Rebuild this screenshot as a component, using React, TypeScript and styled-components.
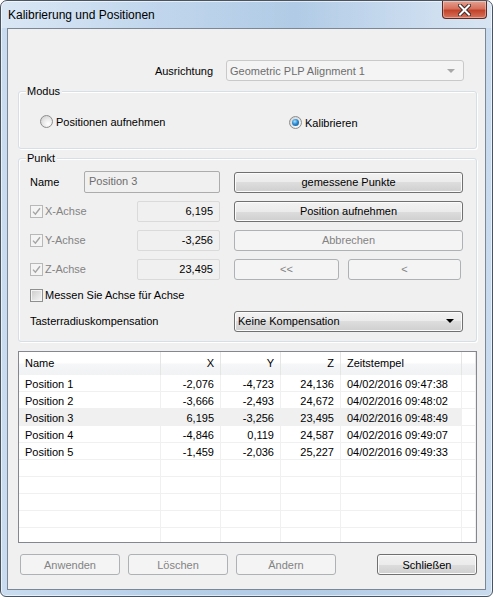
import React from "react";
import styled, { createGlobalStyle, css } from "styled-components";

const GlobalStyle = createGlobalStyle`
    html, body {
        margin: 0;
        padding: 0;
        background: #ffffff;
        overflow: hidden;
    }
    body {
        font-family: "Liberation Sans", Arial, sans-serif;
        font-size: 11px;
        color: #000000;
    }
`;

interface Measurement {
    name: string;
    x: string;
    y: string;
    z: string;
    time: string;
}

const measurements: Measurement[] = [
    { name: "Position 1", x: "-2,076", y: "-4,723", z: "24,136", time: "04/02/2016 09:47:38" },
    { name: "Position 2", x: "-3,666", y: "-2,493", z: "24,672", time: "04/02/2016 09:48:02" },
    { name: "Position 3", x: "6,195", y: "-3,256", z: "23,495", time: "04/02/2016 09:48:49" },
    { name: "Position 4", x: "-4,846", y: "0,119", z: "24,587", time: "04/02/2016 09:49:07" },
    { name: "Position 5", x: "-1,459", y: "-2,036", z: "25,227", time: "04/02/2016 09:49:33" },
];

const axes = [
    { label: "X-Achse", value: "6,195", button: "Position aufnehmen", enabled: true },
    { label: "Y-Achse", value: "-3,256", button: "Abbrechen", enabled: false },
];

const CheckMark: React.FC<{ color: string }> = ({ color }) => (
    <svg width="9" height="9" viewBox="0 0 9 9">
        <path d="M1 4.6 L3.4 7.2 L8 1.2" fill="none" stroke={color} strokeWidth="1.4" />
    </svg>
);

const App: React.FC = () => {
    return (
        <>
            <GlobalStyle />
            <Window>
                <TitleBar>
                    <Title>Kalibrierung und Positionen</Title>
                    <CloseButton>
                        <svg width="13" height="12" viewBox="0 0 13 12">
                            <path d="M2 1.5 L11 10.5 M11 1.5 L2 10.5" stroke="#3b2a2a" strokeWidth="4" strokeLinecap="square" />
                            <path d="M2 1.5 L11 10.5 M11 1.5 L2 10.5" stroke="#ffffff" strokeWidth="2" strokeLinecap="square" />
                        </svg>
                    </CloseButton>
                </TitleBar>

                <Client>
                    <AlignRow>
                        <Label>Ausrichtung</Label>
                        <ComboBox $disabled $width={238}>
                            <span>Geometric PLP Alignment 1</span>
                            <ArrowDown $color="#a8a8a8" />
                        </ComboBox>
                    </AlignRow>

                    <GroupBox $height={58} $top={10}>
                        <Legend>Modus</Legend>
                        <RadioRow>
                            <RadioItem $width={249} $offset={0}>
                                <Radio />
                                <span>Positionen aufnehmen</span>
                            </RadioItem>
                            <RadioItem $offset={2}>
                                <Radio $checked />
                                <span>Kalibrieren</span>
                            </RadioItem>
                        </RadioRow>
                    </GroupBox>

                    <GroupBox $height={184} $top={9}>
                        <Legend>Punkt</Legend>
                        <PointGrid>
                            <PointRow>
                                <LeftPart>
                                    <NameLabel>Name</NameLabel>
                                    <NameInput>Position 3</NameInput>
                                </LeftPart>
                                <Button $width={229}>gemessene Punkte</Button>
                            </PointRow>

                            {axes.map((a) => (
                                <PointRow key={a.label}>
                                    <LeftPart>
                                        <AxisCheck>
                                            <CheckBox $disabled>
                                                <CheckMark color="#a5a5a5" />
                                            </CheckBox>
                                            <DisabledText>{a.label}</DisabledText>
                                        </AxisCheck>
                                        <ValueBox>{a.value}</ValueBox>
                                    </LeftPart>
                                    <Button $width={229} disabled={!a.enabled}>
                                        {a.button}
                                    </Button>
                                </PointRow>
                            ))}

                            <PointRow>
                                <LeftPart>
                                    <AxisCheck>
                                        <CheckBox $disabled>
                                            <CheckMark color="#a5a5a5" />
                                        </CheckBox>
                                        <DisabledText>Z-Achse</DisabledText>
                                    </AxisCheck>
                                    <ValueBox>23,495</ValueBox>
                                </LeftPart>
                                <ButtonPair>
                                    <Button $width={105} disabled>&lt;&lt;</Button>
                                    <Button $width={113} disabled>&lt;</Button>
                                </ButtonPair>
                            </PointRow>

                            <CheckRow>
                                <CheckBox />
                                <span>Messen Sie Achse für Achse</span>
                            </CheckRow>

                            <PointRow>
                                <LeftPart>
                                    <span>Tasterradiuskompensation</span>
                                </LeftPart>
                                <ComboBox $width={229}>
                                    <span>Keine Kompensation</span>
                                    <ArrowDown $color="#000000" />
                                </ComboBox>
                            </PointRow>
                        </PointGrid>
                    </GroupBox>

                    <ListView>
                        <HeaderRow>
                            <HeaderCell>Name</HeaderCell>
                            <HeaderCell $right>X</HeaderCell>
                            <HeaderCell $right>Y</HeaderCell>
                            <HeaderCell $right>Z</HeaderCell>
                            <HeaderCell>Zeitstempel</HeaderCell>
                            <HeaderCell />
                        </HeaderRow>
                        {measurements.map((m, i) => (
                            <DataRow key={m.name}>
                                <Cell $selected={i === 2}>{m.name}</Cell>
                                <Cell $right $selected={i === 2}>{m.x}</Cell>
                                <Cell $right $selected={i === 2}>{m.y}</Cell>
                                <Cell $right $selected={i === 2}>{m.z}</Cell>
                                <Cell $selected={i === 2}>{m.time}</Cell>
                                <Cell />
                            </DataRow>
                        ))}
                        {Array.from({ length: 5 }).map((_, i) => (
                            <DataRow key={"empty" + i}>
                                <Cell />
                                <Cell />
                                <Cell />
                                <Cell />
                                <Cell />
                                <Cell />
                            </DataRow>
                        ))}
                    </ListView>

                    <FooterRow>
                        <Button $width={100} disabled>Anwenden</Button>
                        <Button $width={100} disabled>Löschen</Button>
                        <Button $width={100} disabled>Ändern</Button>
                        <CloseAction>
                            <Button $width={100}>Schließen</Button>
                        </CloseAction>
                    </FooterRow>
                </Client>
            </Window>
        </>
    );
};

export default App;

const Window = styled.div`
    width: 493px;
    height: 597px;
    box-sizing: border-box;
    border: 1px solid #4a5360;
    border-radius: 7px 7px 6px 6px;
    background: linear-gradient(90deg, #c9dcf0 0%, #b7d0ea 30%, #b1cbe6 60%, #bdd3eb 85%, #c9dbee 100%);
    box-shadow: inset 0 0 0 1px rgba(255, 255, 255, 0.6);
    display: flex;
    flex-direction: column;
    overflow: hidden;
`;

const TitleBar = styled.div`
    height: 27px;
    display: flex;
    flex-direction: row;
    align-items: flex-start;
    background: linear-gradient(90deg, rgba(255, 255, 255, 0.3) 0%, rgba(255, 255, 255, 0.12) 35%, rgba(255, 255, 255, 0) 60%, rgba(255, 255, 255, 0.25) 90%);
`;

const Title = styled.span`
    font-family: "Liberation Sans", Arial, sans-serif;
    font-size: 12px;
    line-height: 16px;
    padding: 6px 0 0 7px;
    color: #000000;
`;

const CloseButton = styled.div`
    margin-left: auto;
    margin-right: 5px;
    width: 45px;
    height: 18px;
    box-sizing: border-box;
    border: 1px solid #5b2a25;
    border-top: none;
    border-radius: 0 0 4px 4px;
    background: linear-gradient(180deg, #e6a190 0%, #d6705c 45%, #c2432a 55%, #d8735c 100%);
    box-shadow: inset 0 0 0 1px rgba(255, 255, 255, 0.35);
    display: flex;
    align-items: center;
    justify-content: center;
`;

const Client = styled.div`
    flex: 1;
    margin: 0 6px 6px 6px;
    border: 1px solid #7b8796;
    background: #f0f0f0;
    display: flex;
    flex-direction: column;
`;

const AlignRow = styled.div`
    margin-top: 31px;
    height: 21px;
    display: flex;
    flex-direction: row;
    align-items: center;
    justify-content: flex-end;
    gap: 13px;
    padding-right: 21px;
`;

const Label = styled.span`
    white-space: nowrap;
`;

const ComboBox = styled.div<{ $disabled?: boolean; $width: number }>`
    width: ${(p) => p.$width}px;
    height: 21px;
    box-sizing: border-box;
    display: flex;
    align-items: center;
    justify-content: space-between;
    padding: 0 8px 0 3px;
    border-radius: 3px;
    ${(p) =>
        p.$disabled
            ? css`
                  border: 1px solid #c9c9c9;
                  background: #f4f4f4;
                  color: #6d6d6d;
              `
            : css`
                  border: 1px solid #707070;
                  background: linear-gradient(180deg, #f2f2f2 0%, #ebebeb 50%, #dddddd 50%, #cfcfcf 100%);
                  box-shadow: inset 0 0 0 1px #fbfbfb;
              `}
`;

const ArrowDown = styled.span<{ $color: string }>`
    width: 0;
    height: 0;
    border-left: 4px solid transparent;
    border-right: 4px solid transparent;
    border-top: 4px solid ${(p) => p.$color};
`;

const GroupBox = styled.div<{ $height: number; $top: number }>`
    position: relative;
    margin: ${(p) => p.$top}px 8px 0 10px;
    height: ${(p) => p.$height}px;
    box-sizing: border-box;
    border: 1px solid #d5dfe5;
    border-radius: 3px;
    box-shadow: inset 1px 1px 0 #ffffff, 1px 1px 0 #ffffff;
`;

const Legend = styled.span`
    position: absolute;
    top: -7px;
    left: 7px;
    padding: 0 2px 0 1px;
    background: #f0f0f0;
    line-height: 13px;
`;

const RadioRow = styled.div`
    display: flex;
    flex-direction: row;
    padding: 22px 0 0 21px;
`;

const RadioItem = styled.div<{ $width?: number; $offset: number }>`
    display: flex;
    align-items: center;
    gap: 3px;
    margin-top: ${(p) => p.$offset}px;
    width: ${(p) => (p.$width ? p.$width + "px" : "auto")};
`;

const Radio = styled.span<{ $checked?: boolean }>`
    position: relative;
    width: 13px;
    height: 13px;
    box-sizing: border-box;
    border-radius: 50%;
    border: 1px solid #8d8d8d;
    background: radial-gradient(circle at 65% 70%, #ffffff 0%, #e9e9e9 45%, #c9c9c9 100%);
    ${(p) =>
        p.$checked &&
        css`
            &::after {
                content: "";
                position: absolute;
                left: 2px;
                top: 2px;
                width: 7px;
                height: 7px;
                border-radius: 50%;
                background: radial-gradient(circle at 40% 35%, #a9e4ff 0%, #2d8ad0 45%, #0d4f86 100%);
            }
        `}
`;

const PointGrid = styled.div`
    display: flex;
    flex-direction: column;
    gap: 7px;
    padding: 12px 0 0 11px;
`;

const PointRow = styled.div`
    height: 22px;
    display: flex;
    flex-direction: row;
    align-items: center;
    gap: 14px;
`;

const LeftPart = styled.div`
    width: 190px;
    display: flex;
    flex-direction: row;
    align-items: center;
    justify-content: space-between;
`;

const NameLabel = styled.span`
    width: 54px;
`;

const NameInput = styled.div`
    width: 136px;
    height: 22px;
    box-sizing: border-box;
    border: 1px solid #acacac;
    border-radius: 2px;
    background: #f0f0f0;
    color: #6d6d6d;
    padding: 3px 0 0 4px;
`;

const AxisCheck = styled.div`
    display: flex;
    align-items: center;
    gap: 2px;
`;

const DisabledText = styled.span`
    color: #838383;
`;

const ValueBox = styled.div`
    width: 83px;
    height: 21px;
    box-sizing: border-box;
    border: 1px solid #dadada;
    border-radius: 2px;
    background: #f0f0f0;
    text-align: right;
    padding: 3px 6px 0 0;
`;

const CheckBox = styled.span<{ $disabled?: boolean }>`
    width: 13px;
    height: 13px;
    box-sizing: border-box;
    display: flex;
    align-items: center;
    justify-content: center;
    ${(p) =>
        p.$disabled
            ? css`
                  border: 1px solid #b8b8b8;
                  background: #f4f4f4;
              `
            : css`
                  border: 1px solid #8e8f8f;
                  background: linear-gradient(135deg, #cbcbcb 0%, #f6f6f6 100%);
                  box-shadow: inset 0 0 0 1px #f4f4f4;
              `}
`;

const CheckRow = styled.div`
    height: 16px;
    display: flex;
    align-items: center;
    gap: 2px;
`;

const ButtonPair = styled.div`
    display: flex;
    gap: 9px;
`;

const Button = styled.button<{ $width: number }>`
    width: ${(p) => p.$width}px;
    height: 21px;
    box-sizing: border-box;
    padding: 0;
    font-family: "Liberation Sans", Arial, sans-serif;
    font-size: 11px;
    color: #000000;
    border: 1px solid #707070;
    border-radius: 3px;
    background: linear-gradient(180deg, #f2f2f2 0%, #ebebeb 50%, #dddddd 50%, #cfcfcf 100%);
    box-shadow: inset 0 0 0 1px #fbfbfb;

    &:disabled {
        color: #838383;
        border-color: #adb2b5;
        background: #f4f4f4;
        box-shadow: none;
    }
`;

const ListView = styled.div`
    margin: 9px 8px 0 10px;
    height: 192px;
    box-sizing: border-box;
    border: 1px solid #828790;
    background: #ffffff;
    overflow: hidden;
`;

const columns = "142px 60px 60px 60px 121px 1fr";

const HeaderRow = styled.div`
    display: grid;
    grid-template-columns: ${columns};
    height: 23px;
    background: linear-gradient(180deg, #ffffff 0%, #ffffff 45%, #f5f6f7 55%, #f1f2f4 100%);
`;

const HeaderCell = styled.div<{ $right?: boolean }>`
    border-right: 1px solid #e5e5e5;
    padding: 0 6px 1px 6px;
    display: flex;
    align-items: center;
    justify-content: ${(p) => (p.$right ? "flex-end" : "flex-start")};
`;

const DataRow = styled.div`
    display: grid;
    grid-template-columns: ${columns};
    height: 17px;
`;

const Cell = styled.div<{ $right?: boolean; $selected?: boolean }>`
    box-sizing: border-box;
    border-right: 1px solid #f0f0f0;
    border-bottom: 1px solid #f0f0f0;
    padding: 1px 6px 0 6px;
    display: flex;
    align-items: center;
    justify-content: ${(p) => (p.$right ? "flex-end" : "flex-start")};
    background: ${(p) => (p.$selected ? "#f0f0f0" : "transparent")};
    white-space: nowrap;
`;

const FooterRow = styled.div`
    margin: 11px 8px 0 12px;
    display: flex;
    flex-direction: row;
    gap: 8px;
`;

const CloseAction = styled.div`
    margin-left: auto;
`;
